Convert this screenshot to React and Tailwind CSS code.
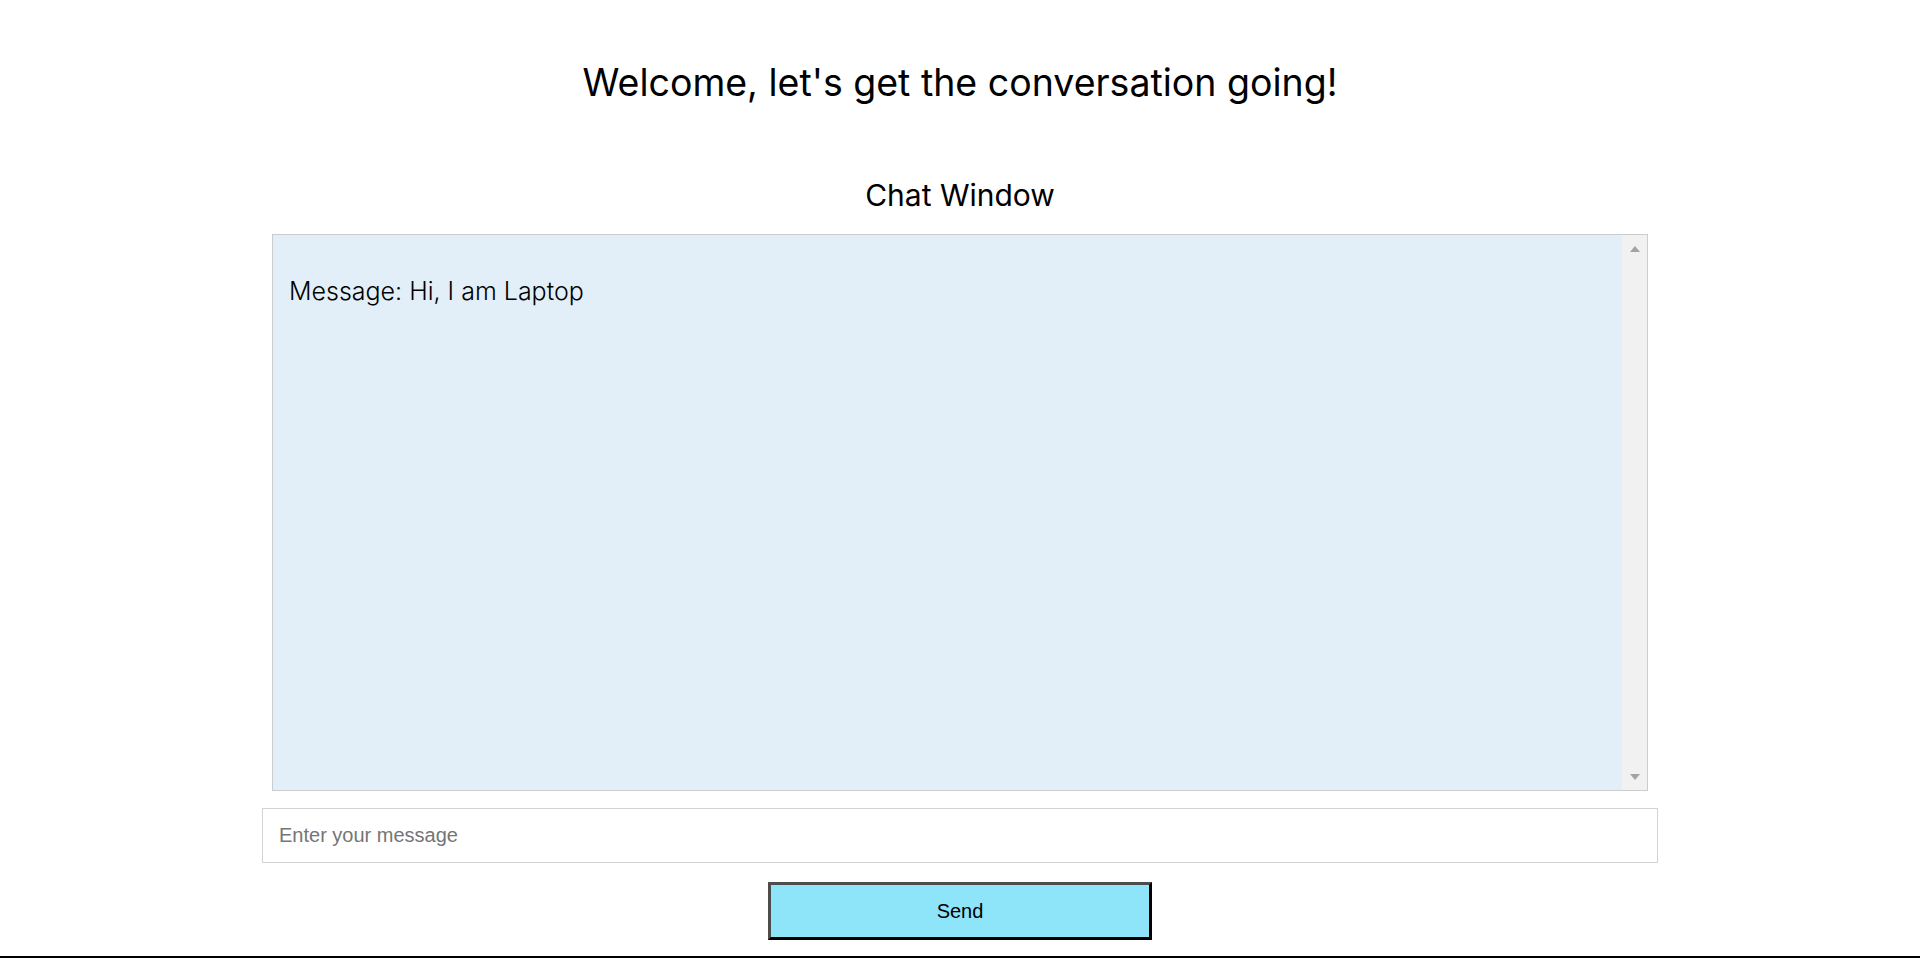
import { useState } from 'react';

const App = () => {
  const [message, setMessage] = useState('');

  return (
    <div className="h-[958px] bg-white border-b-2 border-black flex flex-col items-center font-['Inter',sans-serif] text-black">

      {/* ── Title ── */}
      <h1 className="pt-[63px] text-[37.5px] leading-[40px] font-normal">
        Welcome, let's get the conversation going!
      </h1>

      <h2 className="mt-[77px] text-[30px] leading-[30px] font-normal">
        Chat Window
      </h2>

      {/* ── Chat log ── */}
      <div className="mt-[24px] w-[1376px] h-[557px] flex border border-[#cccccc] bg-[#e2eff8]">
        <div className="flex-1 pl-4 pt-[44px]">
          <p className="text-[25px] leading-[25px] font-light">
            Message: Hi, I am Laptop
          </p>
        </div>

        <div className="w-[25px] bg-[#f1f1f1] flex flex-col items-center justify-between pt-[11px] pb-[10px]">
          <span className="w-0 h-0 border-x-[5.5px] border-x-transparent border-b-[6px] border-b-[#a3a3a3]" />
          <span className="w-0 h-0 border-x-[5.5px] border-x-transparent border-t-[6px] border-t-[#a3a3a3]" />
        </div>
      </div>

      {/* ── Input ── */}
      <input
        type="text"
        value={message}
        onChange={(e) => setMessage(e.target.value)}
        placeholder="Enter your message"
        className="mt-[17px] w-[1396px] h-[55px] border border-[#d3d3d3] px-4 text-[20px] font-['Liberation_Sans',Arial,sans-serif] placeholder:text-[#757575] outline-none"
      />

      {/* ── Send ── */}
      <button
        type="button"
        className="mt-[19px] w-[384px] h-[58px] bg-[#8ee4f9] border-[3px] border-t-[#4d4d4d] border-l-[#4d4d4d] border-r-black border-b-black text-[20px] font-['Liberation_Sans',Arial,sans-serif]"
      >
        Send
      </button>
    </div>
  );
};

export default App;
